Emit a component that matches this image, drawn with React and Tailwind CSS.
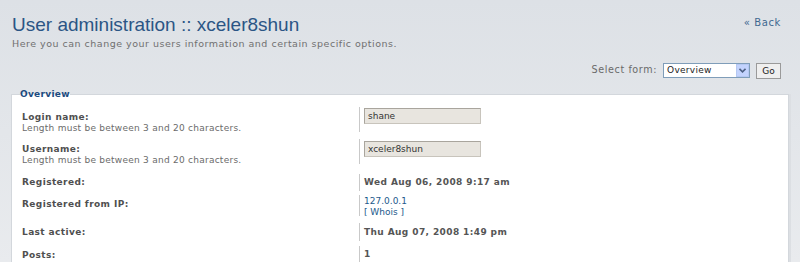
import React from "react";

const rows = [
  {
    label: "Login name:",
    desc: "Length must be between 3 and 20 characters.",
    input: "shane",
    row: "h-[32px]",
    dd: "h-[25px] pt-[1px]",
    dt: "pt-[5px]",
  },
  {
    label: "Username:",
    desc: "Length must be between 3 and 20 characters.",
    input: "xceler8shun",
    row: "h-[35px]",
    dd: "h-[25px] pt-[2px]",
    dt: "pt-[5px]",
  },
  {
    label: "Registered:",
    value: "Wed Aug 06, 2008 9:17 am",
    row: "h-[21px]",
    dd: "h-[17px] pt-[3px]",
    dt: "pt-[3px]",
  },
  {
    label: "Registered from IP:",
    ip: true,
    row: "h-[28px]",
    dd: "h-[21px] pt-[1px]",
    dt: "pt-[4px]",
  },
  {
    label: "Last active:",
    value: "Thu Aug 07, 2008 1:49 pm",
    row: "h-[23px]",
    dd: "h-[18px] pt-[4px]",
    dt: "pt-[4px]",
  },
  {
    label: "Posts:",
    value: "1",
    row: "h-[20px]",
    dd: "h-[17px] pt-[3px]",
    dt: "pt-[4px]",
  },
];

function Row({ r }) {
  return (
    <div className={`flex ${r.row}`}>
      <div className={`w-[337px] shrink-0 leading-[11px] ${r.dt}`}>
        <div className="font-bold text-[#4f4f4f] tracking-[0.4px]">{r.label}</div>
        {r.desc && <div className="text-[#6b6b6b] tracking-[0.25px]">{r.desc}</div>}
      </div>
      <div className={`border-l border-[#c9c9c9] pl-[4px] leading-[11px] ${r.dd}`}>
        {r.input && (
          <div className="w-[117px] h-[16px] bg-[#e8e5df] border border-[#c8c4bc] border-t-[#a9a59d] border-l-[#a9a59d] pl-[3px] text-[#333] leading-[14px]">
            {r.input}
          </div>
        )}
        {r.value && <div className="font-bold text-[#555] tracking-[0.4px]">{r.value}</div>}
        {r.ip && (
          <div className="text-[#1d5a8c]">
            <div>127.0.0.1</div>
            <div>[ Whois ]</div>
          </div>
        )}
      </div>
    </div>
  );
}

export default function App() {
  return (
    <div className="w-[800px] h-[262px] overflow-hidden bg-gradient-to-b from-[#dde1e6] to-[#e9ebee] font-['DejaVu_Sans',sans-serif] text-[9px]">
      <div className="flex justify-between pl-[12px] pr-[19px] pt-[13px]">
        <div>
          <h1 className="text-[#2b5585] text-[19px] leading-[24px] font-['Liberation_Sans',sans-serif]">
            User administration :: xceler8shun
          </h1>
          <p className="text-[#707070] text-[9.5px] tracking-[0.5px] leading-[12px] mt-[1px]">
            Here you can change your users information and certain specific options.
          </p>
        </div>
        <div className="pt-[2px] text-[10px] tracking-[0.6px] text-[#3f6890]">« Back</div>
      </div>

      <div className="flex justify-end items-center pr-[19px] mt-[12px] h-[17px]">
        <span className="text-[#6a6a6a] text-[9.6px] tracking-[0.6px] mr-[6px]">Select form:</span>
        <div className="flex items-center w-[87px] h-[15px] bg-white border border-[#7f9db9] pl-[3px] text-[#222]">
          <span className="flex-1 leading-[13px] tracking-[0.3px]">Overview</span>
          <div className="w-[13px] h-[13px] bg-[#c3d3fd] border border-[#b5c8f2] flex items-center justify-center">
            <svg width="7" height="5" viewBox="0 0 7 5">
              <path d="M0.5 0.8 L3.5 3.8 L6.5 0.8" fill="none" stroke="#4d6185" strokeWidth="1.6" />
            </svg>
          </div>
        </div>
        <button className="ml-[6px] w-[25px] h-[16px] bg-[#efefef] border border-[#9a9a9a] text-[#222] leading-[14px]">
          Go
        </button>
      </div>

      <fieldset className="mx-[11px] mt-[10px] bg-white border border-[#d3d7dc] pl-[10px] pb-[8px] shadow-[2px_0_0_#dcdfe3]">
        <legend className="font-bold text-[#1c4b80] leading-[11px] tracking-[0.3px] px-[0px] ml-[-2px]">Overview</legend>
        <div className="pt-[7px]">
          {rows.map((r) => (
            <Row key={r.label} r={r} />
          ))}
        </div>
      </fieldset>
    </div>
  );
}
